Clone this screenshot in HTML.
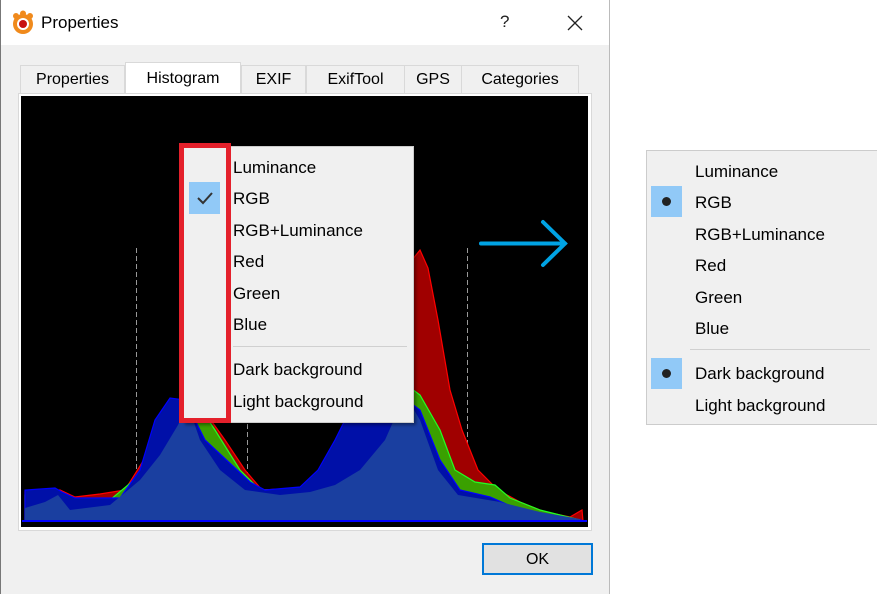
<!DOCTYPE html>
<html><head><style>
body{margin:0;width:877px;height:594px;background:#fff;position:relative;overflow:hidden;font-family:"Liberation Sans",sans-serif;}
.a{position:absolute}
.t{position:absolute;font-size:17px;color:#000;white-space:nowrap;line-height:20px}
.tab{position:absolute;top:65px;height:28px;background:#f0f0f0;border:1px solid #d9d9d9;border-bottom:none;font-size:16px;text-align:center;line-height:28px;box-sizing:border-box}
</style></head><body>
<div class="a" style="left:0;top:0;width:610px;height:594px;background:#f0f0f0;border-left:1px solid #777;box-sizing:border-box"></div>
<div class="a" style="left:1px;top:0;width:609px;height:45px;background:#fff"></div>
<div class="a" style="left:609px;top:0;width:1px;height:594px;background:#bbb"></div>
<svg class="a" style="left:10px;top:10px" width="26" height="26" viewBox="0 0 26 26">
<g fill="#f08a1c"><circle cx="13" cy="14" r="10"/><circle cx="6" cy="6" r="3"/><circle cx="13" cy="3.5" r="3"/><circle cx="20" cy="6" r="3"/></g>
<circle cx="13" cy="14" r="6" fill="#fff"/><circle cx="13" cy="14" r="4" fill="#c81010"/></svg>
<div class="t" style="left:41px;top:13px;font-size:17px">Properties</div>
<div class="t" style="left:500px;top:12px;font-size:17px;color:#222">?</div>
<svg class="a" style="left:567px;top:15px" width="16" height="16"><path d="M1 1L15 15M15 1L1 15" stroke="#222" stroke-width="1.3"/></svg>
<div class="tab" style="left:20px;width:105px">Properties</div>
<div class="tab" style="left:125px;top:62px;height:32px;width:116px;background:#fff;line-height:32px">Histogram</div>
<div class="tab" style="left:241px;width:65px">EXIF</div>
<div class="tab" style="left:306px;width:99px">ExifTool</div>
<div class="tab" style="left:404px;width:58px">GPS</div>
<div class="tab" style="left:461px;width:118px">Categories</div>
<div class="a" style="left:18px;top:93px;width:574px;height:438px;background:#fff;border:1px solid #d9d9d9;box-sizing:border-box"></div>
<div class="a" style="left:21px;top:96px;width:567px;height:431px;background:#000"></div>
<svg class="a" style="left:0;top:0" width="610" height="594">
<g stroke="#999" stroke-dasharray="5,3" stroke-width="1"><line x1="136.5" y1="248" x2="136.5" y2="521"/><line x1="247.5" y1="248" x2="247.5" y2="521"/><line x1="467.5" y1="248" x2="467.5" y2="521"/></g>
<path fill="#a00000" stroke="#f00" stroke-width="1.2" d="M25 521L25 492L60 490L75 497L100 494L125 490L150 450L175 400L200 405L225 440L245 470L262 490L300 488L330 470L360 420L395 300L412 260L420 250L428 268L438 320L450 390L462 430L478 470L498 490L520 502L545 512L570 517L582 510L583 521Z"/>
<path fill="#3aa000" stroke="#2f2" stroke-width="1.2" d="M25 521L25 495L60 492L75 500L110 500L140 475L170 420L195 400L215 430L240 470L260 490L300 490L330 470L360 430L400 380L420 395L440 430L455 470L475 482L495 485L510 498L540 510L580 520Z"/>
<path fill="#0010a8" stroke="#00f" stroke-width="1.2" d="M25 521L25 490L55 488L62 492L75 498L120 498L140 470L155 420L170 398L185 400L205 440L235 468L250 482L265 490L300 487L318 470L335 440L350 410L380 380L420 410L440 460L460 490L490 497L520 510L560 517L581 520L581 521Z"/>
<path fill="#1a3fa0" d="M25 521L25 508L45 502L58 495L70 510L110 505L140 480L160 455L178 425L188 405L200 440L220 470L245 490L280 495L310 492L335 485L360 470L385 440L405 395L420 420L438 470L458 495L500 502L540 512L580 519L580 521Z"/>
<rect x="22" y="520" width="565" height="2" fill="#00f"/>
</svg>
<div class="a" style="left:183px;top:146px;width:231px;height:277px;background:#f0f0f0;border:1px solid #ccc;box-shadow:2px 2px 3px rgba(0,0,0,.4);box-sizing:border-box"></div>
<div class="a" style="left:189px;top:182px;width:31px;height:32px;background:#91c9f7"></div>
<svg class="a" style="left:196px;top:190px" width="18" height="16"><path d="M2 8L7 13L16 3" fill="none" stroke="#333" stroke-width="2"/></svg>
<div class="a" style="left:179px;top:143px;width:52px;height:280px;border:5px solid #e4202b;box-sizing:border-box"></div>
<div class="a" style="left:233px;top:346px;width:174px;height:1px;background:#d0d0d0"></div>
<div class="t" style="left:233px;top:158px">Luminance</div>
<div class="t" style="left:233px;top:189px">RGB</div>
<div class="t" style="left:233px;top:221px">RGB+Luminance</div>
<div class="t" style="left:233px;top:252px">Red</div>
<div class="t" style="left:233px;top:284px">Green</div>
<div class="t" style="left:233px;top:315px">Blue</div>
<div class="t" style="left:233px;top:360px">Dark background</div>
<div class="t" style="left:233px;top:392px">Light background</div>
<div class="a" style="left:482px;top:543px;width:111px;height:32px;background:#e1e1e1;border:2px solid #0078d7;box-sizing:border-box;text-align:center;line-height:30px;font-size:16px">OK</div>
<svg class="a" style="left:470px;top:215px" width="110" height="60"><path d="M11 28.5H95M73 7L95 28.5L73 50" fill="none" stroke="#00a3e4" stroke-width="4" stroke-linecap="round"/></svg>
<div class="a" style="left:646px;top:150px;width:231px;height:275px;background:#f0f0f0;border:1px solid #ccc;border-right:none;box-sizing:border-box"></div>
<div class="a" style="left:651px;top:186px;width:31px;height:31px;background:#91c9f7"></div>
<div class="a" style="left:662px;top:197px;width:9px;height:9px;border-radius:50%;background:#222"></div>
<div class="a" style="left:651px;top:358px;width:31px;height:31px;background:#91c9f7"></div>
<div class="a" style="left:662px;top:369px;width:9px;height:9px;border-radius:50%;background:#222"></div>
<div class="a" style="left:690px;top:349px;width:180px;height:1px;background:#d0d0d0"></div>
<div class="t" style="left:695px;top:162px">Luminance</div>
<div class="t" style="left:695px;top:193px">RGB</div>
<div class="t" style="left:695px;top:225px">RGB+Luminance</div>
<div class="t" style="left:695px;top:256px">Red</div>
<div class="t" style="left:695px;top:288px">Green</div>
<div class="t" style="left:695px;top:319px">Blue</div>
<div class="t" style="left:695px;top:364px">Dark background</div>
<div class="t" style="left:695px;top:396px">Light background</div>
</body></html>
